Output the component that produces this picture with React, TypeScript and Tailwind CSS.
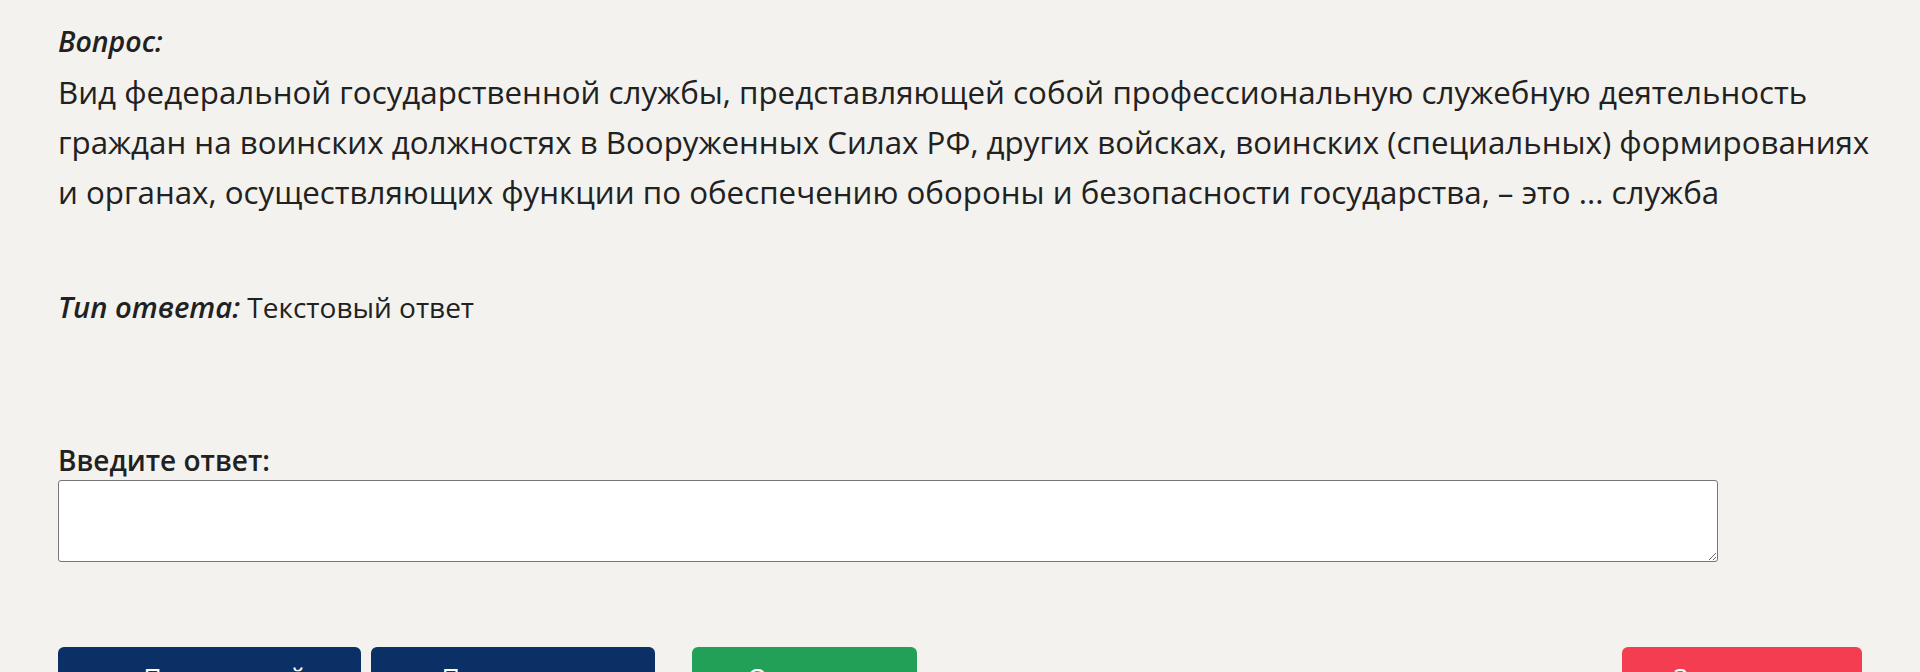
import { useState } from "react";

export default function App() {
  const [answer, setAnswer] = useState("");

  return (
    <div className="min-h-screen bg-[#f3f2ef] text-[#212121] font-['Open_Sans','Noto_Sans',sans-serif]">
      <div className="px-[58px] pt-[21px]">
        {/* question */}
        <div className="text-[28.5px] leading-[40px] font-semibold italic">Вопрос:</div>
        <p className="mt-[6px] text-[31.3px] leading-[50px] whitespace-nowrap">
          Вид федеральной государственной службы, представляющей собой профессиональную служебную деятельность
          <br />
          граждан на воинских должностях в Вооруженных Силах РФ, других войсках, воинских (специальных) формированиях
          <br />
          и органах, осуществляющих функции по обеспечению обороны и безопасности государства, – это ... служба
        </p>

        <div className="mt-[70px] text-[28px] leading-[40px]">
          <span className="text-[29.2px] font-semibold italic">Тип ответа:</span> Текстовый ответ
        </div>

        {/* answer */}
        <div className="mt-[115px]">
          <label htmlFor="answer" className="block text-[28px] leading-[36px] font-semibold">
            Введите ответ:
          </label>
          <textarea
            id="answer"
            value={answer}
            onChange={(e) => setAnswer(e.target.value)}
            className="block mt-[2px] w-[1660px] h-[82px] bg-white border border-[#767676] rounded-[3px] px-2 py-1 text-[24px] outline-none"
          />
        </div>

        {/* buttons */}
        <div className="mt-[85px] flex items-start justify-between text-white text-[25px] leading-[36px]">
          <div className="flex">
            <button className="w-[303px] py-3 pl-[30px] rounded-[6px] bg-[#0a3066] flex justify-center">
              Предыдущий
            </button>
            <button className="ml-[10px] w-[284px] py-3 rounded-[6px] bg-[#0a3066] flex justify-center">
              Пропустить
            </button>
            <button className="ml-[37px] w-[225px] py-3 rounded-[6px] bg-[#23a057] flex justify-center">
              Ответить
            </button>
          </div>
          <button className="w-[240px] py-3 rounded-[6px] bg-[#f53d51] flex justify-center">
            Завершить
          </button>
        </div>
      </div>
    </div>
  );
}
